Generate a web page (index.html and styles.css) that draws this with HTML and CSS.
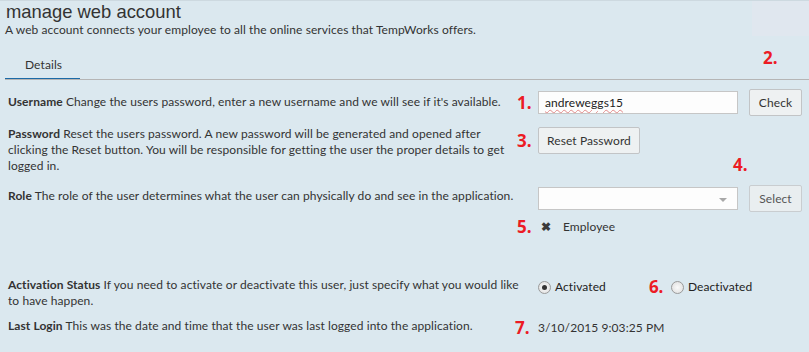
FILE: index.html
```html
<!DOCTYPE html>
<html>
<head>
<meta charset="utf-8">
<link rel="stylesheet" href="styles.css">
</head>
<body>
<div class="page">
  <div class="corner"></div>
  <header class="head">
    <h1 class="title">manage web account</h1>
    <p class="subtitle">A web account connects your employee to all the online services that TempWorks offers.</p>
  </header>
  <nav class="tabs">
    <span class="tab active">Details</span>
  </nav>
  <div class="form">
    <div class="row r-user">
      <div class="desc"><b>Username</b> Change the users password, enter a new username and we will see if it's available.</div>
      <div class="ctrl">
        <span class="num">1.</span>
        <div class="field"><span class="spell">andreweggs15</span></div>
        <button class="btn">Check</button>
      </div>
    </div>
    <div class="row r-pass">
      <div class="desc"><b>Password</b> Reset the users password. A new password will be generated and opened after clicking the Reset button. You will be responsible for getting the user the proper details to get logged in.</div>
      <div class="ctrl">
        <span class="num">3.</span>
        <button class="btn btn-wide">Reset Password</button>
      </div>
    </div>
    <div class="row r-role">
      <div class="desc"><b>Role</b> The role of the user determines what the user can physically do and see in the application.</div>
      <div class="ctrl">
        <span class="num num-blank"></span>
        <div class="field select"><span class="caret"></span></div>
        <button class="btn btn-muted">Select</button>
      </div>
    </div>
    <div class="row r-emp">
      <div class="desc"></div>
      <div class="ctrl">
        <span class="num">5.</span>
        <span class="remove">&#10006;</span>
        <span class="tag">Employee</span>
      </div>
    </div>
    <div class="row r-act">
      <div class="desc"><b>Activation Status</b> If you need to activate or deactivate this user, just specify what you would like to have happen.</div>
      <div class="ctrl">
        <span class="num num-blank"></span>
        <span class="radio checked"></span><span class="rlabel">Activated</span>
        <span class="num num-inline">6.</span>
        <span class="radio"></span><span class="rlabel">Deactivated</span>
      </div>
    </div>
    <div class="row r-login">
      <div class="desc"><b>Last Login</b> This was the date and time that the user was last logged into the application.</div>
      <div class="ctrl">
        <span class="num num-7">7.</span>
        <span class="date">3/10/2015 9:03:25 PM</span>
      </div>
    </div>
  </div>
  <span class="num note n2">2.</span>
  <span class="num note n4">4.</span>
</div>
</body>
</html>
```
FILE: styles.css
```css
html, body {
  margin: 0;
  padding: 0;
}
body {
  background: #dbe8ef;
  font-family: Lato, "Open Sans", sans-serif;
  font-size: 12px;
  letter-spacing: 0.08px;
  color: #333;
  width: 809px;
  height: 352px;
  overflow: hidden;
}
.page {
  position: relative;
  height: 352px;
  border-top: 1px solid #cdd9e0;
  box-sizing: border-box;
}
.corner {
  position: absolute;
  right: 0;
  top: 0;
  width: 57px;
  height: 35px;
  background: #e0e7ef;
}
.head {
  padding: 0 0 0 5px;
}
.title {
  margin: 0;
  font-family: "Liberation Sans", Arial, sans-serif;
  font-weight: normal;
  font-size: 18.4px;
  letter-spacing: 0;
  line-height: 21px;
  color: #333;
  padding-left: 1px;
}
.subtitle {
  margin: 0;
  line-height: 16px;
}
.tabs {
  margin: 18px 0 0 5px;
  border-bottom: 1px solid #b5b5b5;
  display: flex;
  height: 23px;
}
.tab {
  display: block;
  width: 75px;
  padding-left: 20px;
  box-sizing: border-box;
  line-height: 18px;
  margin-bottom: -1px;
  color: #333;
}
.tab.active {
  border-bottom: 1px solid #1c6aa6;
  height: 23px;
}
.form {
  padding: 9px 0 0 8px;
}
.row {
  display: grid;
  grid-template-columns: 509px 1fr;
  line-height: 16px;
}
.desc b {
  font-weight: bold;
}
.r-act .desc {
  margin-right: -9px;
}
.ctrl {
  display: flex;
  align-items: center;
  align-self: start;
}
.num {
  display: inline-block;
  width: 21px;
  font-family: "Open Sans", sans-serif;
  font-weight: bold;
  font-size: 17px;
  letter-spacing: 0;
  color: #ec1b24;
  line-height: 20px;
  flex: none;
}
.num-blank {
  height: 1px;
}
.field {
  width: 200px;
  height: 23px;
  box-sizing: border-box;
  border: 1px solid #c6c6c6;
  background: #fdfdfd;
  padding: 0 6px;
  display: flex;
  align-items: center;
  position: relative;
}
.spell {
  color: #222;
  text-decoration: underline wavy #e28a8a;
  text-decoration-thickness: 1px;
  text-underline-offset: 2px;
}
.btn {
  margin-left: 11px;
  height: 27px;
  min-width: 53px;
  box-sizing: border-box;
  border: 1px solid #c2c4c6;
  border-radius: 2px;
  background: #eef1f2;
  font-family: Lato, "Open Sans", sans-serif;
  font-size: 12px;
  letter-spacing: 0.08px;
  color: #333;
  padding: 0 8px;
  white-space: nowrap;
}
.btn-wide {
  margin-left: 0;
  width: 102px;
}
.btn-muted {
  color: #555;
  background: #e9eef0;
  border-color: #c9cdd0;
}
.caret {
  position: absolute;
  right: 10px;
  top: 10px;
  width: 0;
  height: 0;
  border-left: 4px solid transparent;
  border-right: 4px solid transparent;
  border-top: 4px solid #a8a8a8;
}
.r-user .desc {
  padding-top: 5px;
}
.r-user .field {
  margin-top: 2px;
  margin-bottom: 2px;
}
.r-pass {
  margin-top: 10px;
}
.r-pass .ctrl {
  margin-top: 1px;
}
.r-role {
  margin-top: 11px;
}
.r-role .desc {
  padding-top: 3px;
}
.r-emp {
  margin-top: 5px;
}
.remove {
  font-size: 12px;
  font-weight: bold;
  color: #3a3a3a;
  width: 25px;
  padding-left: 3px;
  box-sizing: border-box;
}
.tag {
  color: #333;
}
.r-act {
  margin-top: 40px;
}
.radio {
  width: 13px;
  height: 13px;
  border-radius: 50%;
  border: 1px solid #9a9a9a;
  box-sizing: border-box;
  background: radial-gradient(circle, #fafafa 0%, #dcdcdc 100%);
  position: relative;
  flex: none;
  margin-right: 4px;
}
.radio.checked::after {
  content: "";
  position: absolute;
  left: 3px;
  top: 3px;
  width: 5px;
  height: 5px;
  border-radius: 50%;
  background: #333;
}
.rlabel {
  color: #222;
}
.num-inline {
  margin-left: 43px;
  width: 22px;
}
.r-login {
  margin-top: 9px;
}
.num-7 {
  margin-left: -2px;
  width: 23px;
}
.date {
  color: #333;
}
.note {
  position: absolute;
}
.n2 {
  left: 763px;
  top: 47px;
}
.n4 {
  left: 733px;
  top: 154px;
}
```
